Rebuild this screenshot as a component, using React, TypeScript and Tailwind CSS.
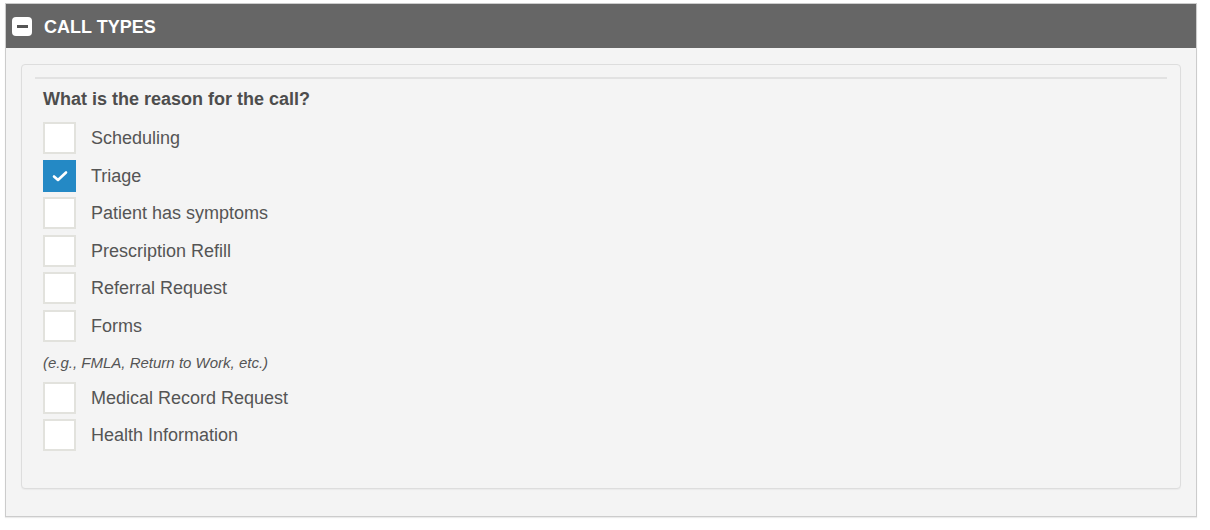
import React from "react";

const items1 = [
  { label: "Scheduling", checked: false },
  { label: "Triage", checked: true },
  { label: "Patient has symptoms", checked: false },
  { label: "Prescription Refill", checked: false },
  { label: "Referral Request", checked: false },
  { label: "Forms", checked: false },
];
const items2 = [
  { label: "Medical Record Request", checked: false },
  { label: "Health Information", checked: false },
];

function Row({ label, checked }: { label: string; checked: boolean }) {
  return (
    <div className="flex items-center h-[32px]">
      {checked ? (
        <div className="w-[33px] h-[32px] bg-[#2489c5] flex items-center justify-center">
          <svg width="16" height="12" viewBox="0 0 16 12">
            <path d="M2 6.5 L6 10 L14 2.5" stroke="#ffffff" strokeWidth="2.6" fill="none" strokeLinecap="round" strokeLinejoin="round" />
          </svg>
        </div>
      ) : (
        <div className="w-[33px] h-[32px] bg-white border-2 border-[#e2e2dd] box-border" />
      )}
      <span className="ml-[15px] text-[18px] text-[#555555] leading-[20px]">{label}</span>
    </div>
  );
}

export default function App() {
  return (
    <div className="w-[1210px] h-[530px] bg-white pt-[3px] pl-[5px]" style={{ fontFamily: '"Liberation Sans", Arial, sans-serif' }}>
      <div className="w-[1192px] h-[514px] border border-[#cccccc] bg-[#f4f4f4] flex flex-col shadow-[0_1px_1px_rgba(0,0,0,0.08)]">
        <div className="h-[44px] bg-[#666666] flex items-center pl-[6px]">
          <div className="w-[20px] h-[19px] bg-white rounded-[4px] flex items-center justify-center">
            <div className="w-[11px] h-[3px] bg-[#555555]" />
          </div>
          <span className="ml-[12px] text-white font-bold text-[18px] leading-[20px] mt-[1px]">CALL TYPES</span>
        </div>
        <div className="pt-[16px] px-[15px]">
          <div className="border border-[#dddddd] rounded-[4px] bg-[#f4f4f4] h-[425px] px-[13px] pt-[12px] shadow-[0_1px_1px_rgba(0,0,0,0.04)]">
            <div className="h-[2px] bg-[#e2e2e2]" />
            <div className="px-[8px] pt-[9px] flex flex-col">
              <div className="text-[18px] font-bold text-[#4d4d4d] leading-[22px] mb-[12px]">What is the reason for the call?</div>
              <div className="flex flex-col gap-[5.6px]">
                {items1.map((it) => (
                  <Row key={it.label} {...it} />
                ))}
              </div>
              <div className="italic text-[15px] text-[#555555] leading-[18px] mt-[12px] mb-[10px]">(e.g., FMLA, Return to Work, etc.)</div>
              <div className="flex flex-col gap-[5px]">
                {items2.map((it) => (
                  <Row key={it.label} {...it} />
                ))}
              </div>
            </div>
          </div>
        </div>
      </div>
    </div>
  );
}
